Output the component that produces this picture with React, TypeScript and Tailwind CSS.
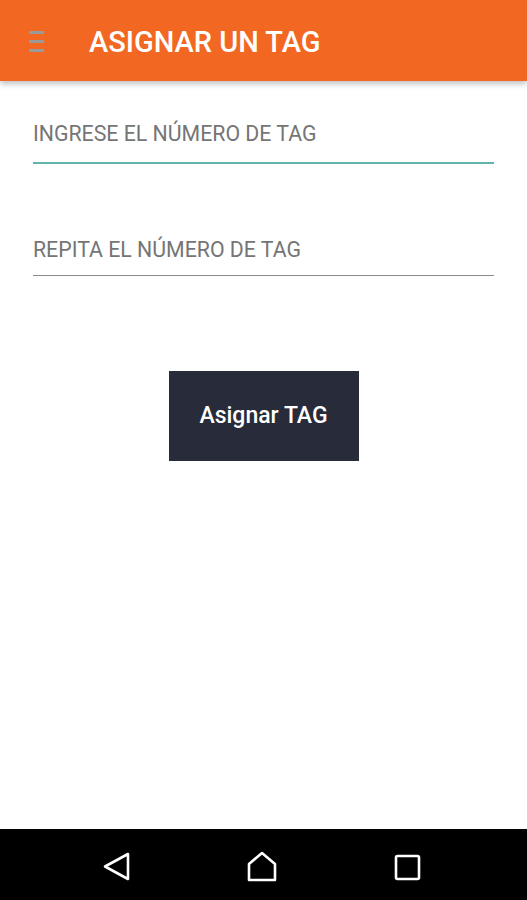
export default function App() {
  return (
    <div className="flex h-[900px] w-[527px] flex-col bg-white font-['Roboto',sans-serif]">
      <header className="relative z-10 flex h-[81px] shrink-0 items-center bg-[#f26722] shadow-[0_3px_6px_rgba(0,0,0,0.25)]">
        <div className="ml-[29px] flex w-[15px] flex-col gap-[6px] pt-[2px]">
          <span className="h-[3px] bg-[#9a9a9a]" />
          <span className="h-[3px] bg-[#9a9a9a]" />
          <span className="h-[3px] bg-[#9a9a9a]" />
        </div>
        <h1 className="ml-[45px] pt-[4px] text-[29px] font-medium leading-none text-white">
          ASIGNAR UN TAG
        </h1>
      </header>

      <main className="flex flex-1 flex-col px-[33px] pt-[42px]">
        <div className="border-b-2 border-[#5fb5ab] pb-[14px]">
          <span className="text-[21.3px] leading-none text-[#757575]">INGRESE EL NÚMERO DE TAG</span>
        </div>
        <div className="mt-[75px] border-b border-[#8a8a8a] pb-[11px]">
          <span className="text-[21.3px] leading-none text-[#757575]">REPITA EL NÚMERO DE TAG</span>
        </div>
        <div className="mt-[95px] flex justify-center">
          <button className="h-[90px] w-[190px] bg-[#272b3a] text-[23px] font-medium text-white">
            Asignar TAG
          </button>
        </div>
      </main>

      <nav className="relative flex h-[71px] shrink-0 items-center bg-black">
        <svg className="absolute left-[102px] top-[22px]" width="30" height="31" viewBox="0 0 30 31" fill="none" stroke="white" strokeWidth="2.6" strokeLinejoin="round">
          <path d="M26 3 L3 15.5 L26 28 Z" />
        </svg>
        <svg className="absolute left-[246px] top-[22px]" width="32" height="31" viewBox="0 0 32 31" fill="none" stroke="white" strokeWidth="2.6" strokeLinejoin="round">
          <path d="M16 2 L29 13 L29 29 L3 29 L3 13 Z" />
        </svg>
        <svg className="absolute left-[394px] top-[25px]" width="27" height="27" viewBox="0 0 27 27" fill="none" stroke="white" strokeWidth="2.6" strokeLinejoin="round">
          <rect x="2" y="2" width="23" height="23" rx="1.5" />
        </svg>
      </nav>
    </div>
  );
}
